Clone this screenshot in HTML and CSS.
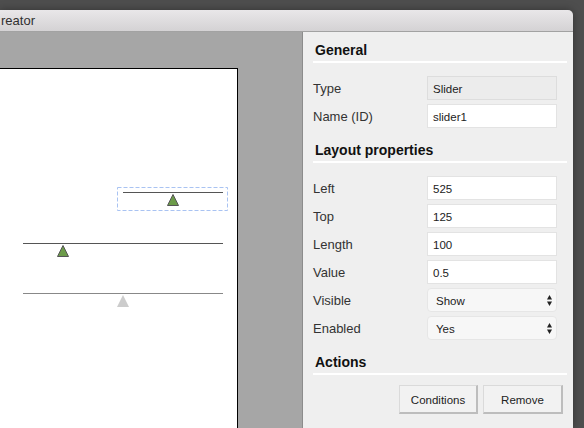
FILE: index.html
```html
<!DOCTYPE html>
<html>
<head>
<meta charset="utf-8">
<link rel="stylesheet" href="styles.css">
</head>
<body>
<div class="window">
  <div class="titlebar">reator</div>
  <div class="main">
    <div class="canvas">
      <div class="page">
        <div class="slider sel" style="left:117px;top:118px">
          <svg width="112" height="25" viewBox="0 0 112 25">
            <rect x="0.5" y="0.5" width="110" height="23" fill="none" stroke="#a9c3f2" stroke-dasharray="4 2"/>
            <line x1="6" y1="5.5" x2="106" y2="5.5" stroke="#555"/>
            <polygon points="56,7.5 61.5,18.5 50.5,18.5" fill="#6c9b49" stroke="#555"/>
          </svg>
        </div>
        <div class="slider" style="left:23px;top:174px">
          <svg width="200" height="14" viewBox="0 0 200 14">
            <line x1="0" y1="0.5" x2="200" y2="0.5" stroke="#555"/>
            <polygon points="40,2.5 45.5,13.5 34.5,13.5" fill="#6c9b49" stroke="#555"/>
          </svg>
        </div>
        <div class="slider" style="left:23px;top:224px">
          <svg width="200" height="14" viewBox="0 0 200 14">
            <line x1="0" y1="0.5" x2="200" y2="0.5" stroke="#888"/>
            <polygon points="100,2 106,14 94,14" fill="#cccccc"/>
          </svg>
        </div>
      </div>
    </div>
    <div class="panel">
      <div class="section-title">General</div>
      <div class="rows">
        <label>Type</label><div class="field disabled">Slider</div>
        <label>Name (ID)</label><div class="field">slider1</div>
      </div>
      <div class="section-title">Layout properties</div>
      <div class="rows">
        <label>Left</label><div class="field">525</div>
        <label>Top</label><div class="field">125</div>
        <label>Length</label><div class="field">100</div>
        <label>Value</label><div class="field">0.5</div>
        <label>Visible</label><div class="select">Show<svg class="arrows" width="5" height="11" viewBox="0 0 5 11"><polygon points="0,4.5 2.5,0 5,4.5" fill="#222"/><polygon points="0,6.5 5,6.5 2.5,11" fill="#222"/></svg></div>
        <label>Enabled</label><div class="select">Yes<svg class="arrows" width="5" height="11" viewBox="0 0 5 11"><polygon points="0,4.5 2.5,0 5,4.5" fill="#222"/><polygon points="0,6.5 5,6.5 2.5,11" fill="#222"/></svg></div>
      </div>
      <div class="section-title">Actions</div>
      <div class="actions">
        <button class="btn">Conditions</button>
        <button class="btn">Remove</button>
      </div>
    </div>
  </div>
</div>
</body>
</html>
```
FILE: styles.css
```css
html, body {
  margin: 0;
  padding: 0;
}
body {
  width: 584px;
  height: 428px;
  overflow: hidden;
  background: #4e4e4e;
  font-family: "Liberation Sans", Arial, sans-serif;
}
.window {
  margin-top: 10px;
  width: 573px;
  height: 418px;
  border-radius: 0 5px 0 0;
  overflow: hidden;
  display: flex;
  flex-direction: column;
  box-shadow: 0 0 8px rgba(0, 0, 0, 0.35);
}
.titlebar {
  height: 21px;
  line-height: 21px;
  font-size: 13px;
  color: #303030;
  background: linear-gradient(#e9e7e9, #d4d2d4);
  border-bottom: 1px solid #a2a2a2;
  padding-left: 1px;
}
.main {
  flex: 1;
  display: flex;
  min-height: 0;
}
.canvas {
  width: 302px;
  background: #a6a6a6;
  border-right: 1px solid #8c8c8c;
  overflow: hidden;
}
.page {
  position: relative;
  margin-top: 36px;
  width: 237px;
  height: 400px;
  background: #ffffff;
  border-top: 1px solid #000;
  border-right: 1px solid #000;
}
.slider {
  position: absolute;
  line-height: 0;
}
.slider svg {
  display: block;
}
.panel {
  flex: 1;
  background: #efefef;
  padding: 10px 6px 0 10px;
}
.section-title {
  font-size: 14px;
  font-weight: bold;
  line-height: 17px;
  color: #111;
  padding: 0 0 2px 2px;
  border-bottom: 2px solid #ffffff;
}
.rows {
  display: grid;
  grid-template-columns: 114px 130px;
  row-gap: 4px;
  margin: 13px 0 14px;
}
.rows label {
  font-size: 13px;
  color: #333;
  height: 22px;
  padding-top: 2px;
  line-height: 22px;
}
.field {
  height: 20px;
  padding-top: 2px;
  line-height: 20px;
  border: 1px solid #e3e3e3;
  background: #ffffff;
  font-size: 11.5px;
  color: #222;
  padding-left: 5px;
}
.field.disabled {
  background: #ececec;
  border-color: #dddddd;
}
.select {
  position: relative;
  height: 20px;
  padding-top: 2px;
  line-height: 20px;
  border: 1px solid #e6e6e6;
  border-radius: 4px;
  background: #f7f7f7;
  font-size: 11.5px;
  color: #222;
  padding-left: 8px;
}
.arrows {
  position: absolute;
  right: 4px;
  top: 6px;
  display: block;
}
.actions {
  display: flex;
  justify-content: flex-end;
  gap: 5px;
  padding: 10px 4px 0 0;
}
.btn {
  font-family: "Liberation Sans", Arial, sans-serif;
  font-size: 11.5px;
  color: #222;
  height: 29px;
  background: #f2f2f2;
  border-top: 1px solid #dadada;
  border-left: 1px solid #dadada;
  border-right: 2px solid #bdbdbd;
  border-bottom: 2px solid #bdbdbd;
  border-radius: 0;
  padding: 2px 0 0;
}
.btn:first-child {
  width: 79px;
}
.btn:last-child {
  width: 80px;
}
```
